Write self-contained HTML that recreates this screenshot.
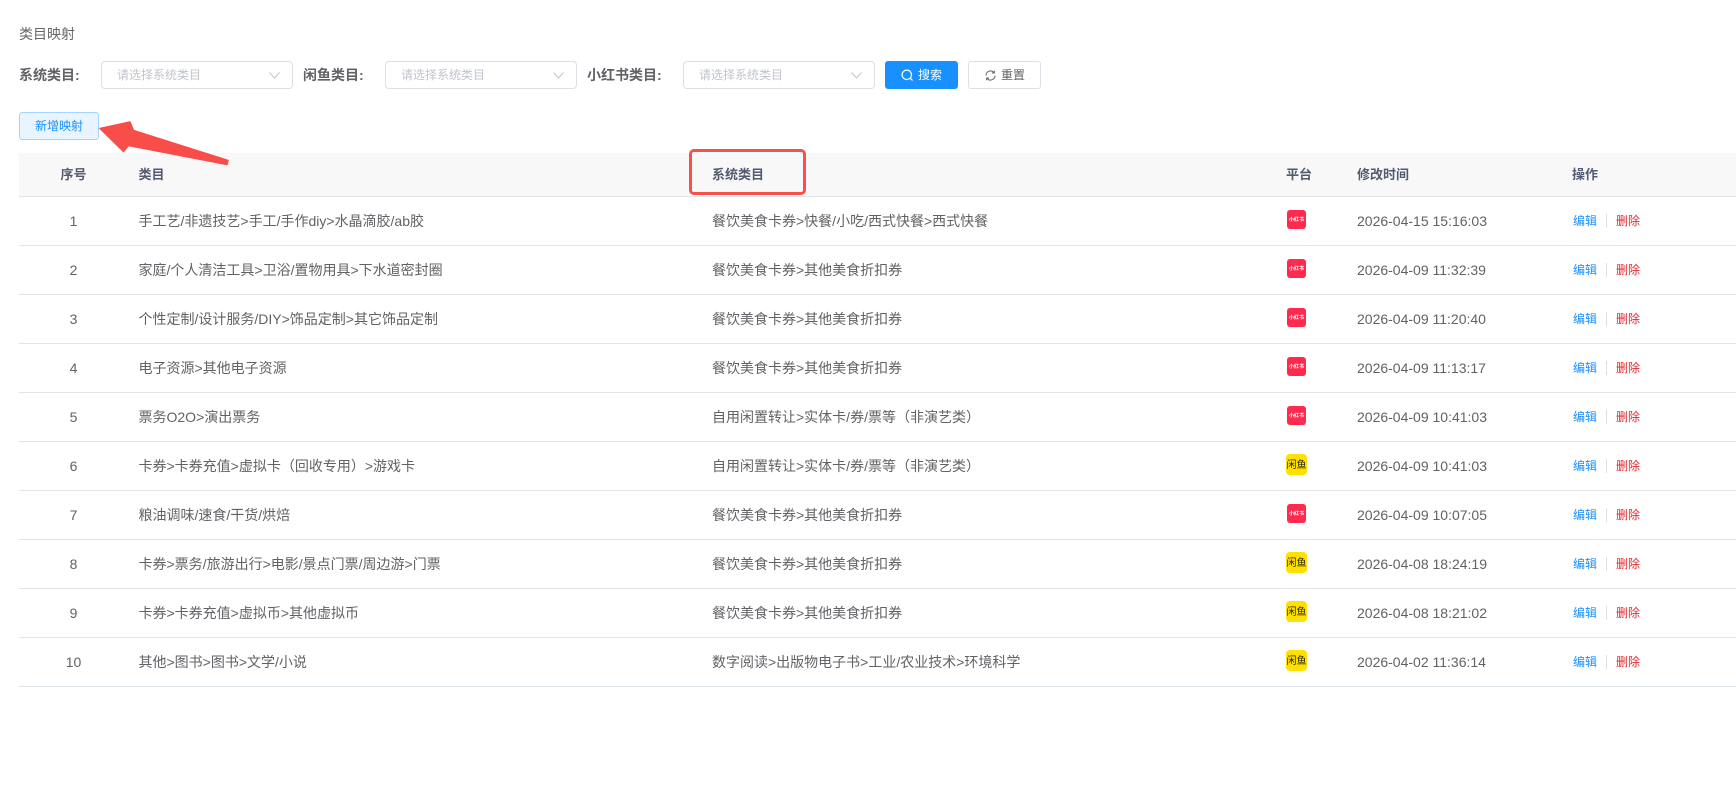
<!DOCTYPE html>
<html lang="zh-CN">
<head>
<meta charset="utf-8">
<title>类目映射</title>
<style>
*{box-sizing:border-box}
html,body{margin:0;padding:0;background:#fff;width:1736px;height:791px;overflow:hidden;font-family:"Liberation Sans","Noto Sans CJK SC",sans-serif;font-size:14px;color:#606266}
.abs{position:absolute}
.title{left:19px;top:24px;line-height:20px;color:#666}
.lab{top:65px;line-height:20px;font-weight:700;color:#606266}
.sel{top:61px;width:192px;height:28px;border:1px solid #dcdfe6;border-radius:4px;background:#fff;color:#c0c4cc;line-height:26px;padding-left:15px;font-size:12px}
.sel svg{position:absolute;right:12px;top:10px}
.btn{top:61px;height:28px;border-radius:3px;font-size:12px;line-height:26px;border:1px solid #dcdfe6;background:#fff;color:#606266}
.btn svg{position:absolute}
.btn span{position:absolute;top:0;white-space:nowrap}
table{position:absolute;left:19px;top:153px;width:1717px;table-layout:fixed;border-collapse:separate;border-spacing:0}
th{height:44px;background:#f8f8f9;color:#515a6e;font-weight:700;font-size:13px;text-align:left;padding:0 0 2px 10px;border-bottom:1px solid #dfe6ec}
td{height:49px;padding:0 0 0 10px;border-bottom:1px solid #dfe6ec;color:#606266;white-space:nowrap}
th:nth-child(1),td:nth-child(1){text-align:center;padding:0}
th:nth-child(1){padding-bottom:2px}
th:nth-child(2),td:nth-child(2){padding-left:10.5px}
.logo{display:block;position:relative;top:-1.500px;overflow:hidden;text-align:center;white-space:nowrap}
.r{width:19px;height:19px;margin-left:1px;border-radius:3px;background:#ff2a4e;color:#fff;font-size:5px;font-weight:700;line-height:21px}
.y{width:21px;height:21px;border-radius:4px;background:#ffe000;color:#2a2510;font-size:10px;font-weight:400;line-height:23px}
.a{font-size:12px;padding-left:11px !important}
.a span{position:relative;top:-1px}
.a i{font-style:normal;color:#1890ff}
.a b{font-weight:400;color:#e0282c}
.a u{display:inline-block;width:1px;height:14px;background:#dcdfe6;margin:0 9px 0 9px;vertical-align:-3px;text-decoration:none}
</style>
</head>
<body>
<div class="abs title">类目映射</div>

<div class="abs lab" style="left:19px">系统类目:</div>
<div class="abs sel" style="left:101px">请选择系统类目<svg width="11" height="7" viewBox="0 0 11 7"><path d="M.5.5 5.500 6 10.500.5" fill="none" stroke="#c0c4cc"/></svg></div>
<div class="abs lab" style="left:303px">闲鱼类目:</div>
<div class="abs sel" style="left:385px">请选择系统类目<svg width="11" height="7" viewBox="0 0 11 7"><path d="M.5.5 5.500 6 10.500.5" fill="none" stroke="#c0c4cc"/></svg></div>
<div class="abs lab" style="left:587px">小红书类目:</div>
<div class="abs sel" style="left:683px">请选择系统类目<svg width="11" height="7" viewBox="0 0 11 7"><path d="M.5.5 5.500 6 10.500.5" fill="none" stroke="#c0c4cc"/></svg></div>

<div class="abs btn" style="left:885px;width:73px;background:#1890ff;border-color:#1890ff;color:#fff">
<svg style="left:15px;top:7px" width="13" height="13" viewBox="0 0 13 13"><circle cx="5.800" cy="5.800" r="4.700" fill="none" stroke="#fff" stroke-width="1.200"/><path d="M9.200 9.200 11.500 11.500" stroke="#fff" stroke-width="1.200"/></svg>
<span style="left:32px">搜索</span></div>
<div class="abs btn" style="left:968px;width:73px">
<svg style="left:16px;top:8px" width="11" height="11" viewBox="0 0 11 11"><path d="M1 5.500A4.500 4.500 0 0 1 8.800 2.400M10 5.500A4.500 4.500 0 0 1 2.200 8.600" fill="none" stroke="#606266" stroke-width="1"/><path d="M9.300.7V3H7M1.700 10.300V8H4" fill="none" stroke="#606266" stroke-width="1"/></svg>
<span style="left:32px">重置</span></div>

<div class="abs btn" style="left:19px;top:112px;width:80px;background:#e8f4ff;border-color:#a3d3ff;color:#1890ff;text-align:center">新增映射</div>

<table>
<colgroup><col style="width:109px"><col style="width:574px"><col style="width:574px"><col style="width:71px"><col style="width:215px"><col style="width:174px"></colgroup>
<thead><tr><th>序号</th><th>类目</th><th>系统类目</th><th>平台</th><th>修改时间</th><th>操作</th></tr></thead>
<tbody>
<tr><td>1</td><td>手工艺/非遗技艺&gt;手工/手作diy&gt;水晶滴胶/ab胶</td><td>餐饮美食卡券&gt;快餐/小吃/西式快餐&gt;西式快餐</td><td><span class="logo r">小红书</span></td><td>2026-04-15 15:16:03</td><td class="a"><span><i>编辑</i><u></u><b>删除</b></span></td></tr>
<tr><td>2</td><td>家庭/个人清洁工具&gt;卫浴/置物用具&gt;下水道密封圈</td><td>餐饮美食卡券&gt;其他美食折扣券</td><td><span class="logo r">小红书</span></td><td>2026-04-09 11:32:39</td><td class="a"><span><i>编辑</i><u></u><b>删除</b></span></td></tr>
<tr><td>3</td><td>个性定制/设计服务/DIY&gt;饰品定制&gt;其它饰品定制</td><td>餐饮美食卡券&gt;其他美食折扣券</td><td><span class="logo r">小红书</span></td><td>2026-04-09 11:20:40</td><td class="a"><span><i>编辑</i><u></u><b>删除</b></span></td></tr>
<tr><td>4</td><td>电子资源&gt;其他电子资源</td><td>餐饮美食卡券&gt;其他美食折扣券</td><td><span class="logo r">小红书</span></td><td>2026-04-09 11:13:17</td><td class="a"><span><i>编辑</i><u></u><b>删除</b></span></td></tr>
<tr><td>5</td><td>票务O2O&gt;演出票务</td><td>自用闲置转让&gt;实体卡/券/票等（非演艺类）</td><td><span class="logo r">小红书</span></td><td>2026-04-09 10:41:03</td><td class="a"><span><i>编辑</i><u></u><b>删除</b></span></td></tr>
<tr><td>6</td><td>卡券&gt;卡券充值&gt;虚拟卡（回收专用）&gt;游戏卡</td><td>自用闲置转让&gt;实体卡/券/票等（非演艺类）</td><td><span class="logo y">闲鱼</span></td><td>2026-04-09 10:41:03</td><td class="a"><span><i>编辑</i><u></u><b>删除</b></span></td></tr>
<tr><td>7</td><td>粮油调味/速食/干货/烘焙</td><td>餐饮美食卡券&gt;其他美食折扣券</td><td><span class="logo r">小红书</span></td><td>2026-04-09 10:07:05</td><td class="a"><span><i>编辑</i><u></u><b>删除</b></span></td></tr>
<tr><td>8</td><td>卡券&gt;票务/旅游出行&gt;电影/景点门票/周边游&gt;门票</td><td>餐饮美食卡券&gt;其他美食折扣券</td><td><span class="logo y">闲鱼</span></td><td>2026-04-08 18:24:19</td><td class="a"><span><i>编辑</i><u></u><b>删除</b></span></td></tr>
<tr><td>9</td><td>卡券&gt;卡券充值&gt;虚拟币&gt;其他虚拟币</td><td>餐饮美食卡券&gt;其他美食折扣券</td><td><span class="logo y">闲鱼</span></td><td>2026-04-08 18:21:02</td><td class="a"><span><i>编辑</i><u></u><b>删除</b></span></td></tr>
<tr><td>10</td><td>其他&gt;图书&gt;图书&gt;文学/小说</td><td>数字阅读&gt;出版物电子书&gt;工业/农业技术&gt;环境科学</td><td><span class="logo y">闲鱼</span></td><td>2026-04-02 11:36:14</td><td class="a"><span><i>编辑</i><u></u><b>删除</b></span></td></tr>
</tbody>
</table>

<div class="abs" style="left:688.500px;top:149px;width:117px;height:46px;border:3.500px solid #f9504c;border-radius:5px"></div>
<svg class="abs" style="left:0;top:0" width="300" height="200" viewBox="0 0 300 200"><path d="M100 128.500 130 122 133.500 130.500 228 160.500 227 164.500 128.500 145.500 123.500 151.500 Z" fill="#f94d4a" stroke="#f94d4a" stroke-width="1.500" stroke-linejoin="round"/></svg>
</body>
</html>
